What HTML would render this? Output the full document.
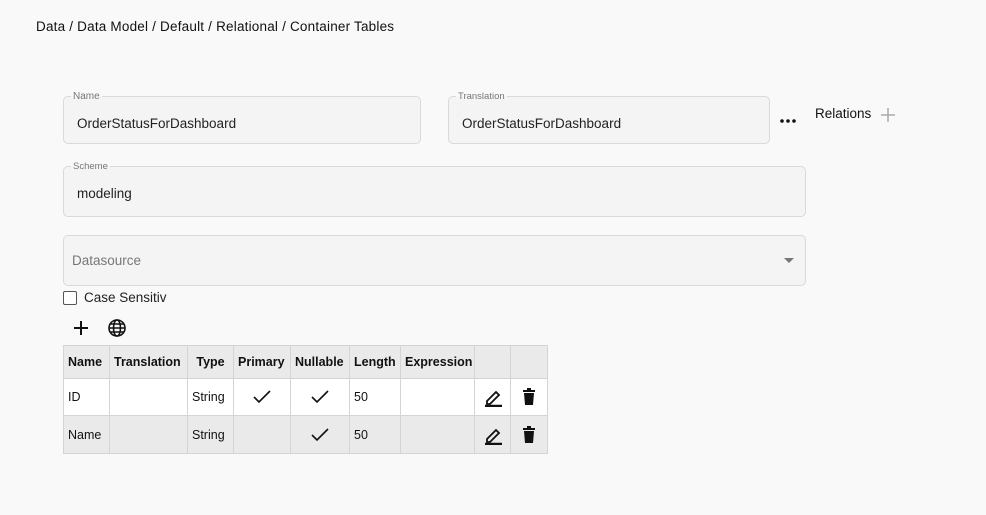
<!DOCTYPE html>
<html><head><style>
*{box-sizing:border-box;margin:0;padding:0}
body{width:986px;height:515px;background:#f9f9f9;font-family:"Liberation Sans",sans-serif;color:#111;position:relative;overflow:hidden}
.a{position:absolute}
.f{position:absolute;background:#f4f4f4;border:1px solid #d9d9d9;border-radius:5px}
.lab{position:absolute;top:-6px;left:7px;font-size:10px;color:#777;background:linear-gradient(#f9f9f9 50%,#f4f4f4 50%);padding:0 2px;line-height:11px}
.val{position:absolute;left:13px;font-size:13.5px;color:#222}
table{position:absolute;left:63px;top:345px;border-collapse:collapse;font-size:12.5px;table-layout:fixed;width:484px}
td{border:1px solid #d4d4d4;padding:0 4px;height:37px;white-space:nowrap;overflow:hidden}
tr.h td{font-weight:bold;height:33px;background:#eaeaea;font-size:12.5px}
tr.r1 td{background:#fff}
tr.r2 td{background:#eaeaea;height:38px}
.c{text-align:center}
svg{vertical-align:middle}
</style></head><body>
<div class="a" style="left:36px;top:19px;font-size:13.5px;letter-spacing:0.2px">Data / Data Model / Default / Relational / Container Tables</div>

<div class="f" style="left:63px;top:96px;width:358px;height:48px"><span class="lab">Name</span><span class="val" style="top:19px">OrderStatusForDashboard</span></div>
<div class="f" style="left:448px;top:96px;width:322px;height:48px"><span class="lab" style="font-size:9.5px">Translation</span><span class="val" style="top:19px">OrderStatusForDashboard</span></div>
<svg class="a" style="left:780px;top:119px" width="16" height="4"><circle cx="2" cy="2" r="1.8" fill="#111"/><circle cx="8" cy="2" r="1.8" fill="#111"/><circle cx="14" cy="2" r="1.8" fill="#111"/></svg>
<div class="a" style="left:815px;top:106px;font-size:13.5px">Relations</div>
<svg class="a" style="left:881px;top:108px" width="14" height="14"><path d="M7 0v14M0 7h14" stroke="#aaa" stroke-width="1.5"/></svg>

<div class="f" style="left:63px;top:166px;width:743px;height:51px"><span class="lab" style="font-size:9.5px">Scheme</span><span class="val" style="top:19px">modeling</span></div>
<div class="f" style="left:63px;top:235px;width:743px;height:51px"><span class="val" style="left:8px;top:17px;color:#777">Datasource</span>
<svg class="a" style="left:720px;top:22px" width="10" height="6"><path d="M0 0h10L5 5z" fill="#777"/></svg></div>

<div class="a" style="left:63px;top:291px;width:14px;height:14px;border:1.5px solid #555;border-radius:2px;background:#fff"></div>
<div class="a" style="left:84px;top:290px;font-size:13.5px;color:#222">Case Sensitiv</div>

<svg class="a" style="left:73px;top:320px" width="16" height="16"><path d="M8 1v14M1 8h14" stroke="#111" stroke-width="2"/></svg>
<svg class="a" style="left:108px;top:319px" width="18" height="18" fill="none" stroke="#111" stroke-width="1.6"><circle cx="9" cy="9" r="8"/><ellipse cx="9" cy="9" rx="3.5" ry="8"/><path d="M1 9h16M2.5 5h13M2.5 13h13"/></svg>

<table>
<colgroup><col style="width:46px"><col style="width:78px"><col style="width:46px"><col style="width:57px"><col style="width:59px"><col style="width:51px"><col style="width:74px"><col style="width:36px"><col style="width:37px"></colgroup>
<tr class="h"><td>Name</td><td>Translation</td><td class="c">Type</td><td>Primary</td><td>Nullable</td><td>Length</td><td>Expression</td><td></td><td></td></tr>
<tr class="r1"><td>ID</td><td></td><td>String</td><td class="c"><svg width="18" height="14"><path d="M1 7l5 5L17 1" fill="none" stroke="#111" stroke-width="1.6"/></svg></td><td class="c"><svg width="18" height="14"><path d="M1 7l5 5L17 1" fill="none" stroke="#111" stroke-width="1.6"/></svg></td><td>50</td><td></td><td class="c"><svg width="20" height="20"><path d="M4 14l9-9 3 3-9 9H4z" fill="none" stroke="#111" stroke-width="1.8"/><path d="M2 19h17" stroke="#111" stroke-width="2.5"/></svg></td><td class="c"><svg width="14" height="18"><path d="M1 3h12M5 1h4" stroke="#111" stroke-width="2"/><path d="M2 5h10l-1 12H3z" fill="#111"/></svg></td></tr>
<tr class="r2"><td>Name</td><td></td><td>String</td><td></td><td class="c"><svg width="18" height="14"><path d="M1 7l5 5L17 1" fill="none" stroke="#111" stroke-width="1.6"/></svg></td><td>50</td><td></td><td class="c"><svg width="20" height="20"><path d="M4 14l9-9 3 3-9 9H4z" fill="none" stroke="#111" stroke-width="1.8"/><path d="M2 19h17" stroke="#111" stroke-width="2.5"/></svg></td><td class="c"><svg width="14" height="18"><path d="M1 3h12M5 1h4" stroke="#111" stroke-width="2"/><path d="M2 5h10l-1 12H3z" fill="#111"/></svg></td></tr>
</table>
</body></html>
